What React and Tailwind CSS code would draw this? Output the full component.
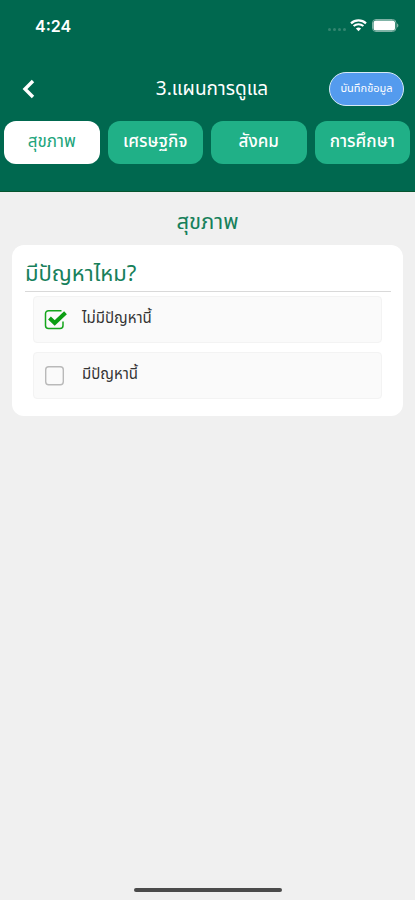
import { useState } from "react";

const TABS = [
  { label: "สุขภาพ", width: "w-[51px]" },
  { label: "เศรษฐกิจ", width: "w-[67px]" },
  { label: "สังคม", width: "w-[42px]" },
  { label: "การศึกษา", width: "w-[68px]" },
];

const OPTIONS = ["ไม่มีปัญหานี้", "มีปัญหานี้"];

function StatusBar() {
  return (
    <div className="flex h-[51px] items-center justify-between pl-[35px] pr-[16px]">
      <span className="font-['Inter',sans-serif] text-[16px] font-semibold leading-none">4:24</span>
      <div className="flex items-center">
        <div className="mr-[4px] mt-[8px] flex gap-[2px]">
          <span className="h-[3px] w-[3px] rounded-full bg-[#338570]" />
          <span className="h-[3px] w-[3px] rounded-full bg-[#338570]" />
          <span className="h-[3px] w-[3px] rounded-full bg-[#338570]" />
          <span className="h-[3px] w-[3px] rounded-full bg-[#338570]" />
        </div>
        <svg className="mr-[5px]" width="17" height="13" viewBox="0 0 17 13" fill="none">
          <path d="M1 4.4C5.2.4 11.8.4 16 4.4" stroke="white" strokeWidth="2.2" />
          <path d="M3.6 7.1C6.4 4.5 10.6 4.5 13.4 7.1" stroke="white" strokeWidth="2" />
          <path d="M5.9 9.5C7.4 8.1 9.6 8.1 11.1 9.5L8.5 12.3Z" fill="white" />
        </svg>
        <svg width="27" height="13" viewBox="0 0 27 13">
          <rect x=".5" y=".5" width="23.5" height="12" rx="3.5" fill="none" stroke="#7fb2a5" />
          <rect x="1.5" y="1.5" width="21.5" height="10" rx="2.5" fill="white" />
          <path d="M25 4.5C26.8 5 26.8 8 25 8.5Z" fill="#7fb2a5" />
        </svg>
      </div>
    </div>
  );
}

function CheckMark({ checked }) {
  if (!checked) {
    return (
      <svg width="24" height="22" viewBox="0 0 24 22" fill="none">
        <rect x="1.7" y="1.7" width="17.6" height="18" rx="3" stroke="#b9b9b9" strokeWidth="1.4" />
      </svg>
    );
  }
  return (
    <svg width="24" height="22" viewBox="0 0 24 22" fill="none">
      <path
        d="M17.5 1.7H4.5A3 3 0 0 0 1.5 4.7V16.5A3 3 0 0 0 4.5 19.5H16A3 3 0 0 0 19 16.5V12.5"
        stroke="#14a51b"
        strokeWidth="1.5"
      />
      <path d="M5.5 9L10.7 14L21.5 3.7" stroke="#0b9e12" strokeWidth="4" />
    </svg>
  );
}

// ปรับความกว้างของข้อความไทยให้พอดีกับช่อง
function FitText({ width, height, size, y, weight = 400, color, children }) {
  return (
    <svg width={width} height={height} className="block shrink-0 overflow-visible" aria-label={children}>
      <text x="0" y={y} fontSize={size} fontWeight={weight} fill={color} textLength={width} lengthAdjust="spacingAndGlyphs">
        {children}
      </text>
    </svg>
  );
}

export default function App() {
  const [activeTab, setActiveTab] = useState(0);
  const [selected, setSelected] = useState(0);

  return (
    <div className="flex h-[900px] w-[415px] flex-col overflow-hidden bg-[#f0f0f0] font-['Noto_Sans_Thai','Noto_Sans',sans-serif]">
      <header className="h-[192px] shrink-0 border-b border-[#06552f] bg-[#00684f] text-white">
        <StatusBar />

        {/* Title */}
        <div className="mt-[16px] flex h-[44px] items-center justify-between pl-[21px] pr-[11px]">
          <button className="flex h-[24px] w-[74px] items-center" aria-label="back">
            <svg width="14" height="20" viewBox="0 0 14 20" fill="none">
              <path d="M12 2L4 10L12 18" stroke="white" strokeWidth="3.4" />
            </svg>
          </button>
          <h1 className="whitespace-nowrap text-[19px] leading-none">3.แผนการดูแล</h1>
          <button className="flex h-[34px] w-[75px] items-center justify-center whitespace-nowrap rounded-full border border-[#d5e9f5] bg-[#549bee] text-[11px]">
            บันทึกข้อมูล
          </button>
        </div>

        {/* Tabs */}
        <nav className="mt-[10px] grid grid-cols-4 gap-[8px] pl-[4px] pr-[5px]">
          {TABS.map((tab, i) => (
            <button
              key={tab.label}
              onClick={() => setActiveTab(i)}
              className={`flex h-[43px] items-center justify-center whitespace-nowrap rounded-[12px] text-[17px] ${
                activeTab === i ? "bg-white text-[#20a47b]" : "bg-[#20b087] font-medium text-white"
              }`}
            >
              {tab.label}
            </button>
          ))}
        </nav>
      </header>

      <main className="flex-1 px-[12px]">
        <h2 className="flex h-[53px] items-center justify-center pt-[8px] text-[22px] text-[#17805b]">สุขภาพ</h2>
        <section className="h-[171px] rounded-[12px] bg-white pl-[13px] pr-[12px]">
          <h3 className="flex h-[47px] items-center border-b border-[#d9d9d9] pt-[12px] text-[22px] text-[#17805b]">
            มีปัญหาไหม?
          </h3>
          <div className="flex flex-col gap-[9px] pl-[8px] pr-[9px] pt-[4px]">
            {OPTIONS.map((option, i) => (
              <button
                key={option}
                onClick={() => setSelected(i)}
                className="flex h-[47px] items-center rounded-[4px] border border-[#f3f3f3] bg-[#fafafa] pl-[10px] text-[15px] text-[#333333]"
              >
                <CheckMark checked={selected === i} />
                <span className="ml-[14px] whitespace-nowrap">{option}</span>
              </button>
            ))}
          </div>
        </section>
      </main>

      <div className="flex h-[12px] shrink-0 justify-center">
        <div className="h-[4px] w-[148px] rounded-full bg-[#4b4b4b]" />
      </div>
    </div>
  );
}
